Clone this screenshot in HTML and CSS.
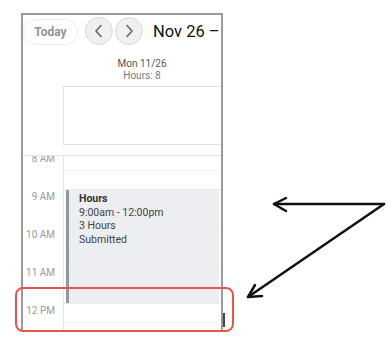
FILE: index.html
```
<!DOCTYPE html>
<html lang="en">
<head>
    <meta charset="UTF-8">
    <title>Calendar week view</title>
    <link rel="stylesheet" href="styles.css">
</head>
<body>
<div class="page">
    <div class="panel">
        <div class="toolbar">
            <button class="today">Today</button>
            <button class="nav-btn" aria-label="Previous">
                <svg width="12" height="14" viewBox="0 0 12 14"><path d="M8 1.5 L3 7 L8 12.5" fill="none" stroke="#666" stroke-width="1.6" stroke-linecap="round" stroke-linejoin="round"/></svg>
            </button>
            <button class="nav-btn" aria-label="Next">
                <svg width="12" height="14" viewBox="0 0 12 14"><path d="M4 1.5 L9 7 L4 12.5" fill="none" stroke="#666" stroke-width="1.6" stroke-linecap="round" stroke-linejoin="round"/></svg>
            </button>
            <span class="range-title">Nov 26 &ndash;</span>
        </div>

        <div class="day-head">
            <div class="gutter"></div>
            <div class="day-col">
                <div class="day-name">Mon 11/26</div>
                <div class="day-hours">Hours: 8</div>
            </div>
        </div>

        <div class="allday">
            <div class="gutter"></div>
            <div class="allday-cell"></div>
        </div>

        <div class="scroller">
            <div class="grid">
                <div class="labels">
                    <div class="hour-label">8 AM</div>
                    <div class="hour-label">9 AM</div>
                    <div class="hour-label">10 AM</div>
                    <div class="hour-label">11 AM</div>
                    <div class="hour-label">12 PM</div>
                </div>
                <div class="slots">
                    <div class="slot"></div>
                    <div class="slot"></div>
                    <div class="slot"></div>
                    <div class="slot"></div>
                    <div class="slot"></div>
                    <div class="event">
                        <div class="event-title">Hours</div>
                        <div>9:00am - 12:00pm</div>
                        <div>3 Hours</div>
                        <div>Submitted</div>
                    </div>
                </div>
            </div>
        </div>
    </div>

    <div class="scroll-mark"></div>
    <div class="highlight"></div>
    <svg class="arrows" width="388" height="341" viewBox="0 0 388 341">
        <g fill="none" stroke="#111" stroke-width="2.5" stroke-linecap="round" stroke-linejoin="round">
            <path d="M384 204 L274 204"/>
            <path d="M286 198 L274 204 L286 211"/>
            <path d="M384 204 L248 297"/>
            <path d="M255 285 L248 297 L262 296"/>
        </g>
    </svg>
</div>
</body>
</html>
```

FILE: styles.css
```
html, body {
    margin: 0;
    background: #fff;
    font-family: Roboto, "Liberation Sans", sans-serif;
}
.page {
    position: relative;
    width: 388px;
    height: 341px;
    padding: 13px 0 0 21px;
    box-sizing: border-box;
    overflow: hidden;
}
.panel {
    width: 202px;
    height: 317px;
    box-sizing: border-box;
    border: 2px solid #9a9a9a;
    border-bottom: none;
    display: flex;
    flex-direction: column;
    overflow: hidden;
}

/* toolbar */
.toolbar {
    display: flex;
    align-items: center;
    height: 32px;
    white-space: nowrap;
}
.today {
    width: 55px;
    height: 26px;
    margin-top: 1px;
    border: 1px solid #ececec;
    border-radius: 13px;
    background: #fff;
    color: #8d939a;
    font-family: inherit;
    font-size: 12px;
    font-weight: 700;
    padding: 0;
}
.nav-btn {
    width: 28px;
    height: 28px;
    margin-left: 7px;
    border: 1px solid #d6d8db;
    border-radius: 50%;
    background: #eef0f2;
    padding: 0;
    display: flex;
    align-items: center;
    justify-content: center;
}
.nav-btn + .nav-btn {
    margin-left: 2px;
}
.range-title {
    margin-left: 10px;
    font-size: 16.5px;
    color: #111;
}

/* day header */
.day-head {
    display: flex;
    margin-top: 11px;
}
.gutter {
    width: 40px;
    flex: none;
}
.day-col {
    flex: 1;
    text-align: center;
    font-size: 10px;
    line-height: 12px;
}
.day-name {
    color: #555;
}
.day-hours {
    color: #7a7a7a;
}

.allday {
    display: flex;
    margin-top: 4px;
}
.allday-cell {
    flex: 1;
    height: 57px;
    border: 1px solid #e2e2e2;
    border-right: none;
}

/* time grid */
.scroller {
    flex: 1;
    margin-top: 10px;
    overflow: hidden;
    border-top: 1px solid #e6e6e6;
}
.grid {
    display: flex;
    margin-top: -4px;
}
.labels {
    width: 40px;
    flex: none;
}
.hour-label {
    height: 38px;
    padding-right: 8px;
    padding-top: 1px;
    box-sizing: border-box;
    text-align: right;
    font-size: 10px;
    line-height: 12px;
    color: #9a9a9a;
}
.slots {
    position: relative;
    flex: 1;
    border-left: 1px solid #e6e6e6;
}
.slot {
    height: 38px;
    box-sizing: border-box;
    border-bottom: 1px solid #e9e9e9;
    background: linear-gradient(#fff 18px, #f4f4f4 18px, #f4f4f4 19px, #fff 19px);
}
.event {
    position: absolute;
    top: 38px;
    left: 2px;
    right: 2px;
    height: 113px;
    box-sizing: border-box;
    background: #eceef1;
    border-left: 3px solid #8f979f;
    padding: 2px 0 0 10px;
    font-size: 10.5px;
    line-height: 13.5px;
    color: #444;
}
.event-title {
    font-weight: 700;
    color: #333;
}

/* overlays */
.scroll-mark {
    position: absolute;
    left: 223px;
    top: 313px;
    width: 2px;
    height: 14px;
    background: #444;
}
.highlight {
    position: absolute;
    left: 15px;
    top: 287px;
    width: 219px;
    height: 45px;
    box-sizing: border-box;
    border: 2px solid #e5554e;
    border-radius: 8px;
}
.arrows {
    position: absolute;
    left: 0;
    top: 0;
}
```
